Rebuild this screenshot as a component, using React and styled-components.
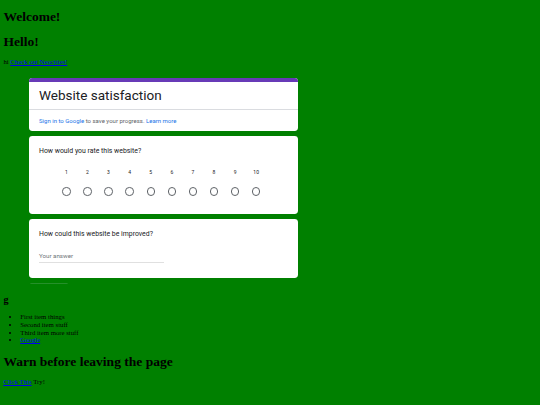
import React from 'react'
import styled, { createGlobalStyle } from 'styled-components'

const GlobalStyle = createGlobalStyle`
  body {
    margin: 0 3.4px 3.4px;
    background-color: green;
    color: #000;
    font-family: "Liberation Serif", "Times New Roman", serif;
    font-size: 6.75px;
    line-height: 7.6px;
  }
`
const Heading = styled.h1`
  font-size: 13.5px;
  line-height: 15.6px;
  margin: 9.05px 0;
`
const SubHeading = styled.h2`
  font-size: 10.1px;
  line-height: 11.8px;
  margin: 10px 0 7.4px;
`
const Paragraph = styled.p`
  margin: 6.75px 0;
`
const Link = styled.a`
  color: #0000ee;
  text-decoration: underline;
`
const List = styled.ul`
  margin: 6.75px 0 10px;
  padding-left: 16.9px;
`
const FormFrame = styled.div`
  box-sizing: border-box;
  width: 320px;
  height: 211.5px;
  overflow: hidden;
  padding: 5.5px 0 0 25.6px;
  font-family: Roboto, "Liberation Sans", sans-serif;
  color: #202124;
`
const Card = styled.div`
  box-sizing: border-box;
  width: 269px;
  margin-bottom: 5px;
  background: #fff;
  border-radius: 3.4px;
  overflow: hidden;
  padding: ${(props) => props.padding || '0'};
`
const TopBar = styled.div`
  height: 3.5px;
  background: #673ab7;
`
const Title = styled.div`
  padding: 5.5px 10px 5px;
  font-size: 13.5px;
  line-height: 17px;
  border-bottom: 0.5px solid #dadce0;
`
const Notice = styled.div`
  padding: 6.5px 10px 7px;
  font-size: 6px;
  line-height: 7.5px;
  color: #5f6368;
`
const FormLink = styled.span`
  color: #1a73e8;
`
const Question = styled.div`
  font-size: 6.9px;
  line-height: 10px;
  color: #202124;
`
const Scale = styled.div`
  display: grid;
  grid-template-columns: repeat(10, 21.1px);
  grid-template-rows: 6px 8.4px;
  row-gap: 12.3px;
  margin: 13px 0 0 16.8px;
  justify-items: center;
  align-items: center;
`
const ScaleLabel = styled.span`
  font-size: 5px;
  line-height: 6px;
  color: #202124;
`
const Radio = styled.span`
  box-sizing: border-box;
  width: 8.4px;
  height: 8.4px;
  border: 0.85px solid #5f6368;
  border-radius: 50%;
`
const AnswerField = styled.div`
  width: 125px;
  margin-top: 14px;
  padding-bottom: 2px;
  border-bottom: 0.5px solid #e0e0e0;
  font-size: 6.2px;
  line-height: 7px;
  color: #70757a;
`
const SubmitEdge = styled.div`
  width: 38px;
  height: 12px;
  margin-left: 1px;
  background: rgba(170, 200, 190, 0.22);
  border-radius: 1.5px;
`

const points = [1, 2, 3, 4, 5, 6, 7, 8, 9, 10]

export default function App() {
  return (
    <>
      <GlobalStyle />
      <Heading>Welcome!</Heading>
      <Heading>Hello!</Heading>
      <Paragraph>
        hi <Link href="#">Check out Neocities!</Link>
      </Paragraph>
      <FormFrame>
        <Card>
          <TopBar />
          <Title>Website satisfaction</Title>
          <Notice>
            <FormLink>Sign in to Google</FormLink> to save your progress.{' '}
            <FormLink>Learn more</FormLink>
          </Notice>
        </Card>
        <Card padding="10px 10px 18.5px">
          <Question>How would you rate this website?</Question>
          <Scale>
            {points.map((n) => (
              <ScaleLabel key={'l' + n}>{n}</ScaleLabel>
            ))}
            {points.map((n) => (
              <Radio key={'r' + n} />
            ))}
          </Scale>
        </Card>
        <Card padding="10px 10px 14.5px">
          <Question>How could this website be improved?</Question>
          <AnswerField>Your answer</AnswerField>
        </Card>
        <SubmitEdge />
      </FormFrame>
      <SubHeading>g</SubHeading>
      <List>
        <li>First item things</li>
        <li>Second item stuff</li>
        <li>Third item more stuff</li>
        <li>
          <Link href="#">Google</Link>
        </li>
      </List>
      <Heading>Warn before leaving the page</Heading>
      <Paragraph>
        <Link href="#">Click This</Link> Try!
      </Paragraph>
    </>
  )
}
